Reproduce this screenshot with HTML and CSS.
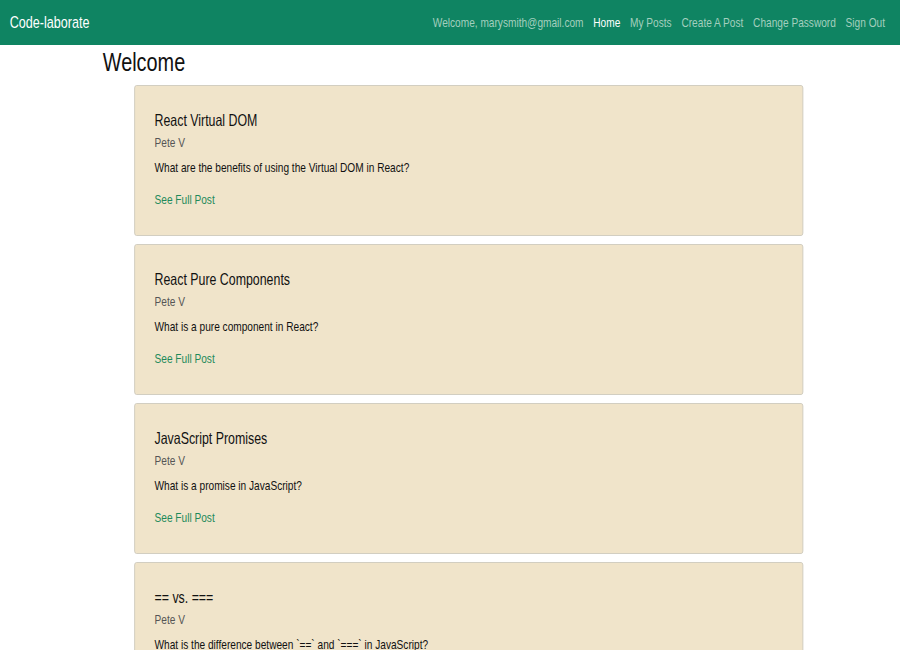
FILE: index.html
```html
<!DOCTYPE html>
<html lang="en">
<head>
<meta charset="utf-8">
<title>Code-laborate</title>
<link rel="stylesheet" href="styles.css">
</head>
<body>
<div class="viewport">
<div class="app">
  <nav class="navbar">
    <a class="brand" href="#">Code-laborate</a>
    <div class="nav-links">
      <span class="nav-item">Welcome, marysmith@gmail.com</span>
      <a class="nav-item active" href="#">Home</a>
      <a class="nav-item" href="#">My Posts</a>
      <a class="nav-item" href="#">Create A Post</a>
      <a class="nav-item" href="#">Change Password</a>
      <a class="nav-item" href="#">Sign Out</a>
    </div>
  </nav>
  <main class="page">
    <h1 class="page-title">Welcome</h1>
    <div class="posts">
      <div class="card">
        <h2 class="card-title">React Virtual DOM</h2>
        <div class="card-author">Pete V</div>
        <p class="card-text">What are the benefits of using the Virtual DOM in React?</p>
        <a class="card-link" href="#">See Full Post</a>
      </div>
      <div class="card">
        <h2 class="card-title">React Pure Components</h2>
        <div class="card-author">Pete V</div>
        <p class="card-text">What is a pure component in React?</p>
        <a class="card-link" href="#">See Full Post</a>
      </div>
      <div class="card">
        <h2 class="card-title">JavaScript Promises</h2>
        <div class="card-author">Pete V</div>
        <p class="card-text">What is a promise in JavaScript?</p>
        <a class="card-link" href="#">See Full Post</a>
      </div>
      <div class="card">
        <h2 class="card-title">== vs. ===</h2>
        <div class="card-author">Pete V</div>
        <p class="card-text">What is the difference between `==` and `===` in JavaScript?</p>
        <a class="card-link" href="#">See Full Post</a>
      </div>
    </div>
  </main>
</div>
</div>
</body>
</html>
```
FILE: styles.css
```css
* { box-sizing: border-box; }
html {
  overflow: hidden;
}
html, body {
  margin: 0;
  padding: 0;
  background: #ffffff;
  font-family: "Liberation Sans", Arial, sans-serif;
  color: #111;
}
a { text-decoration: none; }

.viewport {
  width: 100%;
  overflow: hidden;
}

/* The whole UI is laid out at 1200px and rendered horizontally condensed */
.app {
  width: 1200px;
  transform: scaleX(0.75);
  transform-origin: 0 0;
}

.navbar {
  height: 45px;
  background: #0f8462;
  display: flex;
  align-items: center;
  justify-content: space-between;
  padding: 0 20px 0 13px;
}
.brand {
  color: #ffffff;
  font-size: 16.8px;
}
.nav-links {
  display: flex;
  gap: 13px;
  align-items: center;
}
.nav-item {
  color: #a3cfbe;
  font-size: 13.5px;
}
.nav-item.active { color: #ffffff; }

.page {
  padding-left: 137px;
}
.page-title {
  margin: 0;
  font-size: 26.5px;
  font-weight: normal;
  line-height: 34px;
  color: #111;
}
.posts {
  width: 892px;
  margin: 6px 0 0 42px;
  display: flex;
  flex-direction: column;
  gap: 8px;
}
.card {
  background: #f0e4ca;
  border: 1px solid #cdc8bb;
  border-radius: 3px;
  height: 151px;
  padding: 24px 26px 0;
}
.card-title {
  margin: 0;
  font-size: 16.5px;
  font-weight: normal;
  line-height: 20px;
  color: #111;
}
.card-author {
  margin-top: 4px;
  font-size: 13.5px;
  line-height: 18px;
  color: #555;
}
.card-text {
  margin: 7px 0 0;
  font-size: 13.5px;
  line-height: 18px;
  color: #111;
}
.card-link {
  display: inline-block;
  margin-top: 14px;
  font-size: 13.5px;
  line-height: 18px;
  color: #1e8a5a;
}
```
